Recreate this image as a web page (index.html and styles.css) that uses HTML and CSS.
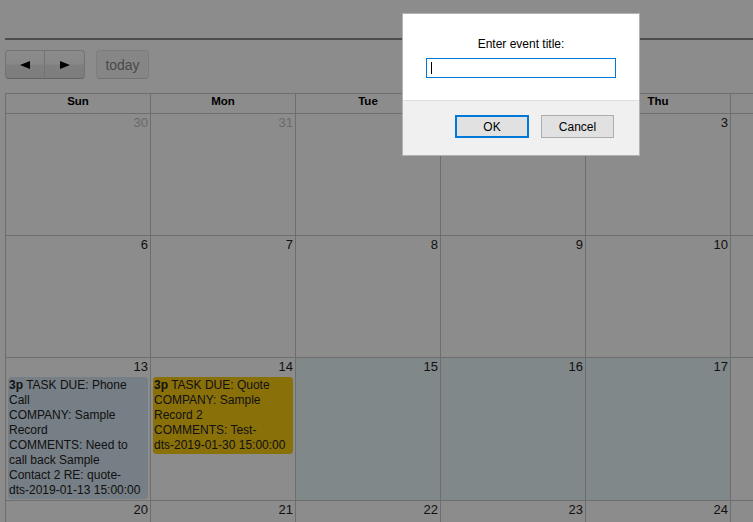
FILE: index.html
```html
<!DOCTYPE html>
<html lang="en-US">
  <head>
    <meta charset="utf-8">
    <title>Calendar</title>
    <link rel="stylesheet" href="styles.css">
  </head>
  <body>
    <div class="page">
      <header class="top-bar"></header>
      <div class="toolbar">
        <div class="btn-group">
          <button class="btn btn-arrow" title="prev">
            <svg width="10" height="8" viewBox="0 0 10 8"><polygon points="10,0 10,8 0,4"/></svg>
          </button>
          <button class="btn btn-arrow" title="next">
            <svg width="10" height="8" viewBox="0 0 10 8"><polygon points="0,0 0,8 10,4"/></svg>
          </button>
        </div>
        <button class="btn btn-today" disabled>today</button>
      </div>

      <table class="month">
        <thead>
          <tr>
            <th>Sun</th><th>Mon</th><th>Tue</th><th>Wed</th><th>Thu</th><th>Fri</th><th>Sat</th>
          </tr>
        </thead>
        <tbody>
          <tr class="week">
            <td class="other"><div class="day-num">30</div></td>
            <td class="other"><div class="day-num">31</div></td>
            <td><div class="day-num">1</div></td>
            <td><div class="day-num">2</div></td>
            <td><div class="day-num">3</div></td>
            <td><div class="day-num">4</div></td>
            <td><div class="day-num">5</div></td>
          </tr>
          <tr class="week">
            <td><div class="day-num">6</div></td>
            <td><div class="day-num">7</div></td>
            <td><div class="day-num">8</div></td>
            <td><div class="day-num">9</div></td>
            <td><div class="day-num">10</div></td>
            <td><div class="day-num">11</div></td>
            <td><div class="day-num">12</div></td>
          </tr>
          <tr class="week">
            <td>
              <div class="day-num">13</div>
              <div class="event event--task">
                <b>3p</b> TASK DUE: Phone<br>
                Call<br>
                COMPANY: Sample<br>
                Record<br>
                COMMENTS: Need to<br>
                call back Sample<br>
                Contact 2 RE: quote-<br>
                dts-2019-01-13 15:00:00
              </div>
            </td>
            <td>
              <div class="day-num">14</div>
              <div class="event event--quote">
                <b>3p</b> TASK DUE: Quote<br>
                COMPANY: Sample<br>
                Record 2<br>
                COMMENTS: Test-<br>
                dts-2019-01-30 15:00:00
              </div>
            </td>
            <td class="selected"><div class="day-num">15</div></td>
            <td class="selected"><div class="day-num">16</div></td>
            <td class="selected"><div class="day-num">17</div></td>
            <td><div class="day-num">18</div></td>
            <td><div class="day-num">19</div></td>
          </tr>
          <tr class="week">
            <td><div class="day-num">20</div></td>
            <td><div class="day-num">21</div></td>
            <td><div class="day-num">22</div></td>
            <td><div class="day-num">23</div></td>
            <td><div class="day-num">24</div></td>
            <td><div class="day-num">25</div></td>
            <td><div class="day-num">26</div></td>
          </tr>
        </tbody>
      </table>
    </div>

    <!-- browser prompt() over the page -->
    <div class="overlay"></div>
    <div class="prompt">
      <div class="prompt-body">
        <div class="prompt-label">Enter event title:</div>
        <div class="prompt-input"><span class="caret"></span></div>
      </div>
      <div class="prompt-foot">
        <button class="prompt-btn prompt-btn--ok">OK</button>
        <button class="prompt-btn">Cancel</button>
      </div>
    </div>
  </body>
</html>
```

FILE: styles.css
```css
html, body {
  overflow: hidden;
}
body {
  margin: 0;
  font-family: "Liberation Sans", Arial, sans-serif;
  background-color: #fff;
  color: #333;
}
.page {
  width: 1016px;
  padding-left: 5px;
}
.top-bar {
  height: 38px;
  border-bottom: 2px solid #8a8a8a;
  margin-right: -20px;
}

.toolbar {
  display: flex;
  align-items: center;
  margin: 10px 0 14px;
}
.btn-group {
  display: flex;
}
.btn {
  box-sizing: border-box;
  height: 29px;
  padding: 0 8px;
  font-family: inherit;
  font-size: 14px;
  color: #333;
  border: 1px solid;
  border-color: #d2d2d2 #d2d2d2 #b5b5b5;
  background-color: #f5f5f5;
  background-image: linear-gradient(to bottom, #fff 0, #f7f7f7 48%, #e8e8e8 52%, #e3e3e3 100%);
  border-radius: 4px;
}
.btn-arrow {
  width: 40px;
  display: flex;
  align-items: center;
  justify-content: center;
}
.btn-arrow:first-child {
  border-radius: 4px 0 0 4px;
}
.btn-arrow:last-child {
  width: 41px;
  margin-left: -1px;
  border-radius: 0 4px 4px 0;
}
.btn-arrow svg {
  fill: #000;
}
.btn-today {
  width: 53px;
  margin-left: 11px;
  opacity: .6;
  background-image: none;
  background-color: #f0f0f0;
}

.month {
  width: 1016px;
  table-layout: fixed;
  border-collapse: collapse;
}
.month th, .month td {
  border: 1px solid #c9c9c9;
  padding: 0;
}
.month th {
  height: 19px;
  font-size: 11.5px;
  line-height: 14px;
  font-weight: bold;
  color: #000;
  vertical-align: top;
}
.week td {
  height: 121px;
  vertical-align: top;
}
.day-num {
  padding: 1px 2px 2px;
  font-size: 13px;
  line-height: 16px;
  text-align: right;
  color: #222;
}
.other .day-num {
  color: #c2c2c2;
}
.selected {
  background-color: #ebf7fb;
}

.event {
  margin: 0 2px 1px;
  padding: 0;
  border: 1px solid;
  border-radius: 3px;
  font-size: 12px;
  line-height: 15px;
  white-space: nowrap;
  overflow: hidden;
  color: #222;
}
.event--task {
  background-color: #d7e7f3;
  border-color: #d7e7f3;
}
.event--quote {
  background-color: #fccd12;
  border-color: #fccd12;
}

.overlay {
  position: fixed;
  inset: 0;
  background: rgba(0, 0, 0, .45);
}
.prompt {
  position: fixed;
  left: 402px;
  top: 13px;
  width: 238px;
  height: 143px;
  box-sizing: border-box;
  display: flex;
  flex-direction: column;
  border: 1px solid rgba(0, 0, 0, .3);
  background: #fff;
  color: #000;
  font-size: 12px;
}
.prompt-body {
  height: 86px;
  box-sizing: border-box;
  padding-top: 23px;
  display: flex;
  flex-direction: column;
  align-items: center;
}
.prompt-label {
  line-height: 14px;
}
.prompt-input {
  box-sizing: border-box;
  width: 190px;
  height: 20px;
  margin-top: 7px;
  padding: 3px 4px;
  border: 1px solid #0078d7;
}
.caret {
  display: block;
  width: 1px;
  height: 12px;
  background: #000;
}
.prompt-foot {
  flex: 1;
  display: flex;
  justify-content: flex-end;
  align-items: flex-start;
  gap: 12px;
  padding: 14px 25px 0 0;
  border-top: 1px solid #dfdfdf;
  background: #f0f0f0;
}
.prompt-btn {
  box-sizing: border-box;
  width: 73px;
  height: 23px;
  padding: 0;
  font-family: inherit;
  font-size: 12px;
  color: #000;
  background: #e1e1e1;
  border: 1px solid #adadad;
}
.prompt-btn--ok {
  width: 74px;
  border: 2px solid #0078d7;
}
```
